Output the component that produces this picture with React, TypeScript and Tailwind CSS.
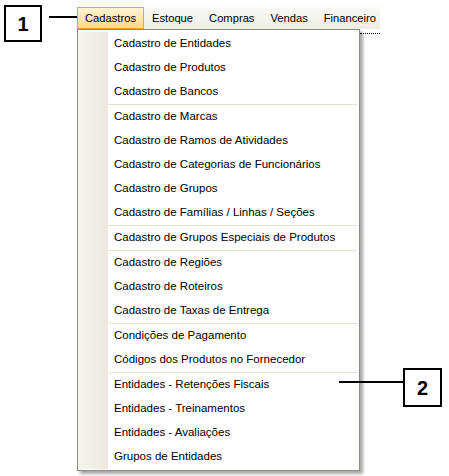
import React from "react";

type Entry = { label: string } | { sep: true };

const entries: Entry[] = [
  { label: "Cadastro de Entidades" },
  { label: "Cadastro de Produtos" },
  { label: "Cadastro de Bancos" },
  { sep: true },
  { label: "Cadastro de Marcas" },
  { label: "Cadastro de Ramos de Atividades" },
  { label: "Cadastro de Categorias de Funcionários" },
  { label: "Cadastro de Grupos" },
  { label: "Cadastro de Famílias / Linhas / Seções" },
  { sep: true },
  { label: "Cadastro de Grupos Especiais de Produtos" },
  { sep: true },
  { label: "Cadastro de Regiões" },
  { label: "Cadastro de Roteiros" },
  { label: "Cadastro de Taxas de Entrega" },
  { sep: true },
  { label: "Condições de Pagamento" },
  { label: "Códigos dos Produtos no Fornecedor" },
  { sep: true },
  { label: "Entidades - Retenções Fiscais" },
  { label: "Entidades - Treinamentos" },
  { label: "Entidades - Avaliações" },
  { label: "Grupos de Entidades" },
];

const topItems = ["Estoque", "Compras", "Vendas", "Financeiro"];

export default function App() {
  return (
    <div className="relative w-[449px] h-[476px] bg-white overflow-hidden font-['Liberation_Sans',Arial,sans-serif] text-[11.3px] text-black">
      <div className="pl-[77px] pt-[7px]">
        {/* menu bar */}
        <div className="flex h-[22px] w-[303px] overflow-hidden bg-gradient-to-b from-[#fbfaf6] to-[#efece3] text-[11.2px]">
          <div className="flex items-center h-[22px] px-[7px] border border-[#e8a53c] bg-gradient-to-b from-[#fff4d2] to-[#fbd98c]">
            Cadastros
          </div>
          {topItems.map((t) => (
            <div key={t} className="flex items-center h-[22px] px-[8px] whitespace-nowrap">
              {t}
            </div>
          ))}
        </div>
        {/* dropdown row */}
        <div className="flex items-start">
          <div className="w-[283px] border border-[#8d8a80] bg-white shadow-[3px_3px_3px_rgba(0,0,0,0.35)] pt-[2px] pb-[1px] text-[11.5px]">
            {entries.map((e, i) =>
              "sep" in e ? (
                <div key={i} className="flex h-[1px]">
                  <div className="w-[30px] bg-gradient-to-r from-[#f6f4ee] to-[#ece8dd]" />
                  <div className="flex-1 bg-[#e6e2d6] mr-[2px]" />
                </div>
              ) : (
                <div key={i} className="flex h-[24px]">
                  <div className="w-[30px] bg-gradient-to-r from-[#f6f4ee] to-[#ece8dd]" />
                  <div className="flex items-center pl-[6px] whitespace-nowrap">{e.label}</div>
                </div>
              )
            )}
          </div>
          <div className="mt-[4px] w-[20px] border-t border-dotted border-black" />
        </div>
      </div>

      {/* annotation 1 */}
      <div className="absolute left-[49px] top-[16px] w-[28px] h-[2px] bg-black" />
      <div className="absolute left-[4px] top-[5px] w-[38px] h-[37px] border-2 border-black bg-white flex items-center justify-center font-['Liberation_Sans',Arial,sans-serif] font-bold text-[20px]">
        1
      </div>

      {/* annotation 2 */}
      <div className="absolute left-[339px] top-[381px] w-[64px] h-[2px] bg-black" />
      <div className="absolute left-[403px] top-[368px] w-[39px] h-[39px] border-2 border-black bg-white flex items-center justify-center font-['Liberation_Sans',Arial,sans-serif] font-bold text-[20px]">
        2
      </div>
    </div>
  );
}
